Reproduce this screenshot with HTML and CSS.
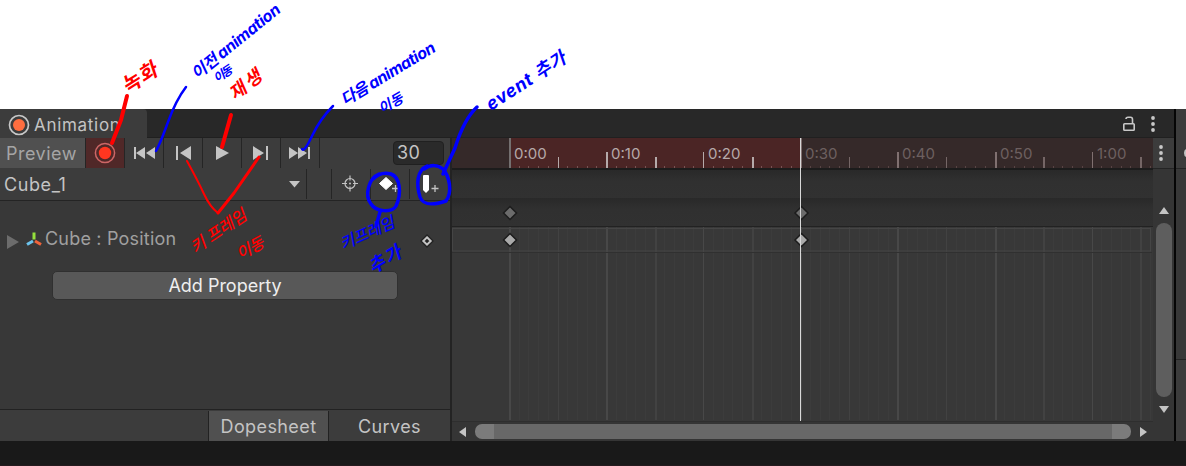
FILE: index.html
```html
<!DOCTYPE html>
<html lang="ko">
<head>
    <meta charset="UTF-8">
    <meta name="viewport" content="width=device-width, initial-scale=1.0">
    <title>Animation</title>
    <link rel="stylesheet" href="styles.css">
</head>
<body>
    <div class="editor">
        <div class="window">
            <div class="tab-bar">
                <div class="tab">
                    <svg class="tab-icon" width="22" height="22" viewBox="0 0 22 22"><circle cx="11" cy="11" r="9.5" fill="none" stroke="#c8c8c8" stroke-width="1.7"/><circle cx="11" cy="11" r="6" fill="#ff6e40"/></svg>
                    <span>Animation</span>
                </div>
                <div class="tab-tools">
                    <svg width="12" height="16" viewBox="0 0 12 16" fill="none" stroke="#c8c8c8" stroke-width="1.6"><rect x=".8" y="7.8" width="10.4" height="6.4" rx=".8"/><path d="M9.5 7.5V3.5Q9.5 1.3 7.5 1.3H5Q3 1.3 3 3"/></svg>
                    <svg width="4" height="16" viewBox="0 0 4 16" fill="#c8c8c8"><circle cx="2" cy="2" r="1.9"/><circle cx="2" cy="8" r="1.9"/><circle cx="2" cy="14" r="1.9"/></svg>
                </div>
            </div>
            <div class="main">
                <div class="left">
                    <div class="toolbar">
                        <div class="preview">Preview</div>
                        <div class="tool record"><svg width="24" height="24" viewBox="0 0 24 24"><circle cx="12" cy="12" r="9.6" fill="none" stroke="#cd6666" stroke-width="1.5"/><circle cx="12" cy="12" r="6.2" fill="#ff3620"/></svg></div>
                        <div class="tool"><svg width="22" height="14" viewBox="0 0 22 14" fill="#c4c4c4"><path d="M1 1h2v12H1zM12 1v12L3 7zM22 1v12l-9-6z"/></svg></div>
                        <div class="tool"><svg width="22" height="16" viewBox="0 0 22 16" fill="#c4c4c4"><path d="M4 1h2v14H4zM19 1v14L8 8z"/></svg></div>
                        <div class="tool"><svg width="22" height="16" viewBox="0 0 22 16" fill="#c4c4c4"><path d="M5 1v14l13-7z"/></svg></div>
                        <div class="tool"><svg width="22" height="16" viewBox="0 0 22 16" fill="#c4c4c4"><path d="M3 1v14l11-7zM16 1h2v14h-2z"/></svg></div>
                        <div class="tool"><svg width="22" height="14" viewBox="0 0 22 14" fill="#c4c4c4"><path d="M0 1v12l9-6zM9 1v12l9-6zM19 1h2v12h-2z"/></svg></div>
                        <div class="frame">30</div>
                    </div>
                    <div class="toolbar clip-bar">
                        <div class="clip"><span>Cube_1</span><svg width="12" height="7" viewBox="0 0 12 7"><path d="M0 0h11L5.500 6.500z" fill="#c4c4c4"/></svg></div>
                        <div class="spacer"></div>
                        <div class="tool"><svg width="18" height="18" viewBox="0 0 18 18" fill="none" stroke="#c4c4c4" stroke-width="1.2"><circle cx="8" cy="8.500" r="5"/><path d="M8 .5v5M8 11.500v5M0 8.500h5M11 8.500h5"/><circle cx="8" cy="8.500" r="1" fill="#c4c4c4" stroke="none"/></svg></div>
                        <div class="tool"><svg width="26" height="22" viewBox="0 0 26 22"><path d="M9 4.500l6.500 6-6.500 6-6.500-6z" fill="#fff" stroke="#fff"/><path d="M18.500 12v7M15 15.500h7" stroke="#c4c4c4" stroke-width="1.300"/></svg></div>
                        <div class="tool"><svg width="22" height="22" viewBox="0 0 22 22"><path d="M4 3q0-1 1-1h4q1 0 1 1v14l-3 3-3-3z" fill="#fff"/><path d="M16 12v7M12.500 15.500h7" stroke="#c4c4c4" stroke-width="1.300"/></svg></div>
                    </div>
                    <div class="properties">
                        <div class="property">
                            <svg width="12" height="14" viewBox="0 0 12 14"><path d="M0 0v14l12-7z" fill="#6c6c6c"/></svg>
                            <svg class="axis" width="16" height="15" viewBox="0 0 16 15" fill="none" stroke-width="3"><path d="M8 .5v7" stroke="#95e03c"/><path d="M7 9l-6 3.500" stroke="#6cc4ee"/><path d="M9 9l6 3.500" stroke="#f0643c"/></svg>
                            <span>Cube : Position</span>
                            <svg class="key" width="14" height="14" viewBox="0 0 14 14"><path d="M7 2.500L11.500 7 7 11.500 2.500 7z" fill="#333" stroke="#222" stroke-width="3.500"/><path d="M7 3.300L10.700 7 7 10.700 3.300 7z" fill="#222" stroke="#c4c4c4" stroke-width="2"/></svg>
                        </div>
                        <button class="add">Add Property</button>
                    </div>
                    <div class="modes">
                        <div class="mode active">Dopesheet</div>
                        <div class="mode">Curves</div>
                    </div>
                </div>
                <div class="timeline">
                    <svg id="sheet" width="701" height="283" viewBox="452 138 701 283">
                        <defs>
                            <linearGradient id="shade" x2="0" y2="1"><stop offset="0" stop-color="#292929"/><stop offset=".4" stop-color="#303030"/><stop offset="1" stop-color="#313131"/></linearGradient>
                        </defs>
                        <rect x="452" y="138" width="701" height="30" fill="#352929"/>
                        <rect x="510" y="138" width="291" height="30" fill="#4b2525"/>
                        <rect x="452" y="168" width="701" height="2" fill="#1c1c1c"/>
                        <rect x="452" y="170" width="701" height="28" fill="url(#shade)"/>
                        <rect x="452" y="198" width="701" height="28" fill="url(#shade)"/>
                        <rect x="452" y="226" width="701" height="1" fill="#222"/>
                        <g id="grid"></g>
                        <rect x="452.500" y="228.500" width="698" height="22.500" fill="none" stroke="#454545"/>
                        <path d="M452 252.500h700" stroke="#303030"/>
                        <g id="keys"></g>
                        <path d="M800.500 138v283" stroke="#d8d8d8"/>
                    </svg>
                    <div class="hscroll">
                        <svg width="7" height="10" viewBox="0 0 7 10"><path d="M7 0v10L0 5z" fill="#c4c4c4"/></svg>
                        <div class="hthumb"></div>
                        <svg width="7" height="10" viewBox="0 0 7 10"><path d="M0 0v10l7-5z" fill="#c4c4c4"/></svg>
                    </div>
                </div>
                <div class="side">
                    <div class="side-menu"><svg width="4" height="16" viewBox="0 0 4 16" fill="#c8c8c8"><circle cx="2" cy="2" r="1.900"/><circle cx="2" cy="8" r="1.900"/><circle cx="2" cy="14" r="1.900"/></svg></div>
                    <div class="vscroll">
                        <svg width="10" height="7" viewBox="0 0 10 7"><path d="M0 7h10L5 0z" fill="#c4c4c4"/></svg>
                        <div class="vthumb"></div>
                        <svg width="10" height="7" viewBox="0 0 10 7"><path d="M0 0h10L5 7z" fill="#c4c4c4"/></svg>
                    </div>
                </div>
            </div>
        </div>
        <div class="neighbor">
            <div class="neighbor-tab"></div>
            <div class="neighbor-bar"><svg width="2" height="8" viewBox="0 0 2 8"><path d="M2 0Q0 1 0 4t2 4z" fill="#c4c4c4"/></svg></div>
            <div class="neighbor-body"></div>
            <div class="neighbor-foot"></div>
        </div>
    </div>
    <div class="footer"></div>

    <!-- handwritten notes -->
    <svg class="notes" width="1186" height="466" viewBox="0 0 1186 466">
        <g class="ink red">
            <path d="M127 96L121 120 112 143" stroke-width="4"/>
            <path d="M231 115L222 147" stroke-width="4"/>
            <path d="M187 161Q198 181 204 194T218 213" stroke-width="2"/>
            <path d="M259 157L234 193 218 213" stroke-width="3"/>
        </g>
        <g class="ink blue">
            <path d="M186 87Q176 100 168 122T156 151" stroke-width="2.5"/>
            <path d="M333 106Q320 119 312 136T302 149" stroke-width="2.5"/>
            <path d="M477 107Q464 119 455 148L443 174" stroke-width="3.5"/>
            <path d="M379 174C369 178 364 195 371 204C376 212 392 213 396 206C402 193 400 177 391 174C384 172 378 174 373 179M380 212L376 226" stroke-width="3.5"/>
            <path d="M427 166C417 170 416 184 420 197C423 205 431 206 446 201C453 191 449 176 443 169C438 165 431 164 424 169" stroke-width="3.5"/>
        </g>
        <g class="note red">
            <text transform="translate(127 94) rotate(-32)" font-size="20" textLength="38">녹화</text>
            <text transform="translate(235 101) rotate(-38)" font-size="18" textLength="36">재생</text>
            <text class="thin" transform="translate(195 254) rotate(-34)" font-size="16.500" textLength="64">키 프레임</text>
            <text class="thin" transform="translate(240 260) rotate(-28)" font-size="16" textLength="29">이동</text>
        </g>
        <g class="note blue">
            <text transform="translate(197 80) rotate(-39)" font-size="16" textLength="109">이전 animation</text>
            <text transform="translate(217 83) rotate(-34)" font-size="12" textLength="20">이동</text>
            <text transform="translate(345 106) rotate(-31)" font-size="16" textLength="107">다음 animation</text>
            <text transform="translate(382 114) rotate(-30)" font-size="14" textLength="26">이동</text>
            <text transform="translate(491 111) rotate(-33)" font-size="18" textLength="91">event 추가</text>
            <text class="thin" transform="translate(343 250) rotate(-24)" font-size="16" textLength="58">키프레임</text>
            <text transform="translate(373 274) rotate(-31)" font-size="18" textLength="35">추가</text>
        </g>
    </svg>
    <script>
        const start = 510;
        const frame = 9.71;
        const grid = document.getElementById('grid');
        let marks = '';

        for (let i = 0; i <= 66; i++) {
            const x = Math.round(start + i * frame) - 1;
            const inside = i < 30;
            let height = 2, color = inside ? '#785454' : '#594545', line = '#3c3c3c', width = 1;

            if (i % 10 === 0) {
                height = i === 0 || i === 30 ? 30 : 16;
                color = inside ? '#b5aaaa' : '#807070';
                line = '#484848';
                width = i === 20 || i === 60 ? 1 : 2;
                if (i === 0) color = '#747070';
            } else if (i % 5 === 0) {
                height = 11;
                color = inside ? '#b5aaaa' : '#756666';
                line = '#424242';
                width = i === 5 || i === 35 || i === 45 ? 1 : 2;
            }
            marks += `<rect x="${x}" y="${168 - height}" width="${width}" height="${height}" fill="${color}"/>`;
            marks += `<rect x="${x}" y="227" width="${width}" height="193" fill="${line}"/>`;
            if (i % 10 === 0) {
                const label = Math.floor(i / 60) + ':' + String(i % 60).padStart(2, '0');
                marks += `<text class="${inside ? 'time' : 'time dim'}" x="${x + 5}" y="159">${label}</text>`;
            }
        }
        grid.innerHTML = marks;

        // summary row and property row keys
        let keys = '';
        [[213, '#6b6b6b'], [240, '#aaa']].forEach(([y, color]) => {
            [510, 801.5].forEach(x => {
                keys += `<path d="M${x} ${y - 6.5}l6.500 6.500-6.500 6.500-6.500-6.500z" fill="${color}" stroke="#1c1c1c" stroke-width="1.500"/>`;
            });
        });
        document.getElementById('keys').innerHTML = keys;
    </script>
</body>
</html>
```

FILE: styles.css
```css
* {
    box-sizing: border-box;
}

body {
    margin: 0;
    padding-top: 109px;
    height: 466px;
    background: #fff;
    color: #c4c4c4;
    font-family: Inter, "Noto Sans CJK KR", sans-serif;
    font-size: 18px;
    letter-spacing: 0.4px;
    overflow: hidden;
}

svg {
    display: block;
    flex-shrink: 0;
}

.editor {
    display: flex;
    height: 332px;
    background: #050505;
}

.window {
    display: flex;
    flex-direction: column;
    width: 1174px;
    margin-right: 2px;
    background: #383838;
}

.tab-bar {
    display: flex;
    justify-content: space-between;
    height: 29px;
    background: #282828;
    border-bottom: 1px solid #202020;
}

.tab {
    display: flex;
    align-items: center;
    gap: 4px;
    width: 147px;
    height: 29px;
    padding: 2px 0 0 8px;
    background: #3c3c3c;
    border-radius: 0 4px 0 0;
    font-size: 17px;
    letter-spacing: 0.7px;
}

.tab-tools {
    display: flex;
    align-items: center;
    gap: 16px;
    padding: 1px 19px 0 0;
}

.main {
    display: flex;
    flex: 1;
    min-height: 0;
}

.left {
    display: flex;
    flex-direction: column;
    width: 452px;
    border-right: 2px solid #232323;
}

.toolbar {
    display: flex;
    height: 30px;
    background: #3c3c3c;
}

.preview {
    width: 86px;
    padding-left: 6px;
    line-height: 31px;
    background: #505050;
    border-right: 1px solid #252525;
    color: #a5a5a5;
    letter-spacing: 0.5px;
}

.tool {
    display: flex;
    align-items: center;
    justify-content: center;
    width: 39px;
    border-right: 1px solid #252525;
}

.record {
    background: #502828;
}

.frame {
    width: 51px;
    height: 24px;
    margin: 3px 6px 0 auto;
    padding-left: 3px;
    line-height: 22px;
    background: #2a2a2a;
    border: 1px solid #202020;
    border-radius: 4px;
}

.clip-bar {
    height: 33px;
    padding: 1px 0;
    border-bottom: 1px solid #242424;
}

.clip {
    display: flex;
    align-items: center;
    justify-content: space-between;
    width: 307px;
    padding: 0 5px 0 4px;
    border-right: 1px solid #252525;
    letter-spacing: 0.6px;
}

.spacer {
    width: 25px;
    border-right: 1px solid #252525;
}

.clip-bar .tool:last-child {
    border-right: 0;
}

.properties {
    flex: 1;
    padding-top: 25px;
}

.property {
    display: flex;
    align-items: center;
    height: 27px;
    padding-left: 7px;
    color: #a0a0a0;
    letter-spacing: 0.2px;
}

.property span {
    margin-top: -2px;
}

.property > svg:first-child {
    margin-top: 4px;
}

.axis {
    margin: -1px 3px 0 7px;
}

.key {
    margin: 3px 16px 0 auto;
}

.add {
    display: block;
    width: 346px;
    height: 29px;
    margin: 18px 0 0 52px;
    padding: 0;
    background: #585858;
    border: 1px solid #303030;
    border-radius: 5px;
    color: #eee;
    font: inherit;
    letter-spacing: 0;
}

.modes {
    display: flex;
    justify-content: flex-end;
    height: 32px;
    padding-top: 1px;
    background: #3c3c3c;
    border-top: 1px solid #222;
}

.mode {
    width: 121px;
    line-height: 31px;
    text-align: center;
    letter-spacing: 0.4px;
}

.mode.active {
    background: #505050;
    border-left: 1px solid #222;
    border-right: 1px solid #222;
}

.timeline {
    width: 701px;
}

.time {
    fill: #b5a9a9;
    font-size: 15px;
    letter-spacing: 0;
}

.time.dim {
    fill: #6d6060;
}

.hscroll {
    display: flex;
    align-items: center;
    gap: 9px;
    height: 20px;
    padding: 0 6px 0 7px;
    background: #353535;
    border-top: 1px solid #2e2e2e;
}

.hthumb {
    flex: 1;
    height: 15px;
    background: #686868;
    border: solid #7b7b7b;
    border-width: 0 19px;
    border-radius: 7px;
}

.side {
    display: flex;
    flex-direction: column;
    width: 21px;
    background: #353535;
}

.side-menu {
    display: flex;
    justify-content: center;
    height: 31px;
    padding: 7px 6px 0 0;
    background: #3c3c3c;
    border-bottom: 1px solid #242424;
}

.vscroll {
    display: flex;
    flex: 1;
    flex-direction: column;
    align-items: center;
    gap: 9px;
    padding: 38px 0 28px 1px;
}

.vthumb {
    flex: 1;
    width: 16px;
    background: #5e5e5e;
    border-radius: 8px;
}

.neighbor {
    display: flex;
    flex: 1;
    flex-direction: column;
    background: #383838;
}

.neighbor-tab {
    height: 29px;
    background: #3c3c3c;
}

.neighbor-bar {
    display: flex;
    justify-content: flex-end;
    height: 31px;
    padding-top: 11px;
    background: #3c3c3c;
    border-bottom: 1px solid #242424;
}

.neighbor-body {
    height: 191px;
    border-bottom: 1px solid #222;
}

.neighbor-foot {
    flex: 1;
    background: #3c3c3c;
}

.footer {
    height: 25px;
    background: #191919;
    border-bottom: 1px solid #251a1e;
}

.notes {
    position: absolute;
    top: 0;
    left: 0;
    pointer-events: none;
}

.ink {
    fill: none;
    stroke-linecap: round;
    stroke-linejoin: round;
}

.ink.red {
    stroke: #f00;
}

.ink.blue {
    stroke: #00f;
}

.note {
    font-family: Inter, "Noto Sans CJK KR", sans-serif;
    font-style: italic;
    font-weight: 700;
    letter-spacing: 0;
}

.note.red {
    fill: #f00;
}

.note.blue {
    fill: #00f;
}

.note .thin {
    font-weight: 500;
}
```
